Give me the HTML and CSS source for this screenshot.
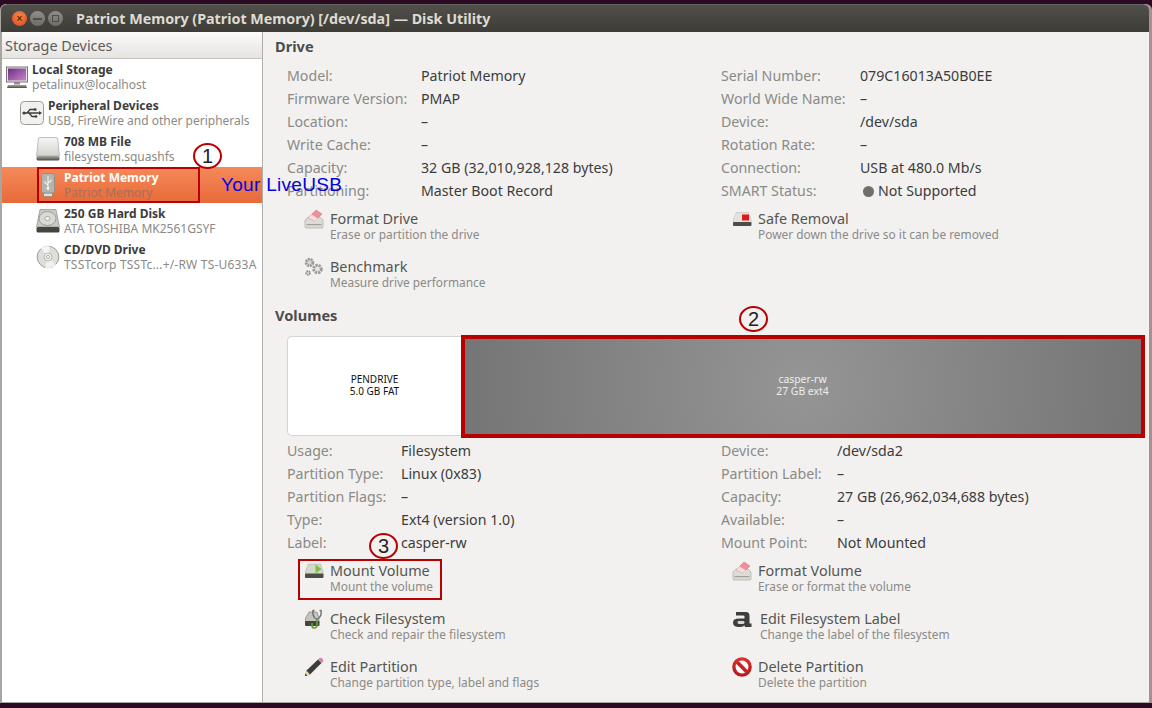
FILE: index.html
```html
<!DOCTYPE html>
<html lang="en">
	<head>
		<title>Disk Utility</title>
		<meta charset="utf-8">
		<link rel="stylesheet" href="styles.css">
	</head>

	<body>
		<svg class="defs" width="0" height="0">
			<defs>
				<linearGradient id="gDisk" x1="0" y1="0" x2="0" y2="1"><stop offset="0" stop-color="#f6f6f4"/><stop offset="1" stop-color="#d2d2ce"/></linearGradient>
				<linearGradient id="gDark" x1="0" y1="0" x2="0" y2="1"><stop offset="0" stop-color="#a8a8a2"/><stop offset="1" stop-color="#4a4a46"/></linearGradient>
				<linearGradient id="gScreen" x1="0" y1="0" x2="1" y2="1"><stop offset="0" stop-color="#6d2f86"/><stop offset="1" stop-color="#c684c4"/></linearGradient>
				<radialGradient id="gNo" cx="0.5" cy="0.3" r="0.8"><stop offset="0" stop-color="#ee3b3b"/><stop offset="1" stop-color="#a51515"/></radialGradient>
				<symbol id="iconErase" viewBox="0 0 20 20">
					<path d="M1 11 L4 8 H16 L19 11 V18 Q19 19 18 19 H2 Q1 19 1 18 Z" fill="#dcdcd6" stroke="#b4b4ae" stroke-width=".8"/>
					<rect x="2.5" y="15" width="15" height="1.2" fill="#a2a29c"/>
					<path d="M4 9 L12 1 L18 5 L11 12 Z" fill="#ee8f9a" stroke="#d97a85" stroke-width=".6"/>
					<path d="M4 9 L7.5 5.5 L14 9.5 L11 12 Z" fill="#f8dcdc"/>
				</symbol>
			</defs>
		</svg>

		<div class="window">
			<div class="titlebar">
				<div class="buttons">
					<span class="wbtn close">×</span>
					<span class="wbtn"><i class="minbar"></i></span>
					<span class="wbtn"><i class="maxbox"></i></span>
				</div>
				<div class="wtitle">Patriot Memory (Patriot Memory) [/dev/sda] — Disk Utility</div>
			</div>

			<div class="main">
				<div class="sidebar">
					<div class="sidehead">Storage Devices</div>
					<div class="tree">
						<div class="node">
							<svg class="ticon" viewBox="0 0 24 24" width="24" height="24">
								<rect x="1.5" y="2" width="21" height="15" fill="#e4e4e0" stroke="#77776f"/>
								<rect x="3" y="3.5" width="18" height="12" fill="url(#gScreen)"/>
								<rect x="9" y="17" width="6" height="2.5" fill="#8c8c86"/>
								<path d="M3 20 H21 L22 23 H2 Z" fill="url(#gDark)"/>
							</svg>
							<div class="ntext"><b>Local Storage</b><span>petalinux@localhost</span></div>
						</div>
						<div class="node lvl1">
							<svg class="ticon" viewBox="0 0 24 24" width="24" height="24">
								<rect x="0.5" y="0.5" width="23" height="23" rx="4" fill="#f1f1ef" stroke="#9b9b96"/>
								<path d="M3 12 H20 M7 12 L10 8.5 H14 M9 12 L12 15.5 H15" fill="none" stroke="#3d3d3a" stroke-width="1.3"/>
								<circle cx="4" cy="12" r="1.6" fill="#3d3d3a"/>
								<path d="M19 10 L22 12 L19 14 Z" fill="#3d3d3a"/>
								<rect x="14" y="7.3" width="2.4" height="2.4" fill="#3d3d3a"/>
								<circle cx="16" cy="15.5" r="1.3" fill="#3d3d3a"/>
							</svg>
							<div class="ntext"><b>Peripheral Devices</b><span>USB, FireWire and other peripherals</span></div>
						</div>
						<div class="node lvl2">
							<svg class="ticon" viewBox="0 0 24 24" width="24" height="24">
								<path d="M4 0.5 H20 Q21.5 0.5 21.7 2 L23.5 19 H0.5 L2.3 2 Q2.5 0.5 4 0.5 Z" fill="url(#gDisk)" stroke="#a8a8a2" stroke-width=".7"/>
								<rect x="0.5" y="19" width="23" height="4.5" rx="1.5" fill="url(#gDark)"/>
							</svg>
							<div class="ntext"><b>708 MB File</b><span>filesystem.squashfs</span></div>
						</div>
						<div class="node lvl2 selected">
							<svg class="ticon" viewBox="0 0 24 24" width="24" height="24">
								<rect x="7.5" y="20" width="9" height="3.5" fill="#e2e2de" stroke="#77776f" stroke-width=".6"/>
								<rect x="5.5" y="0.5" width="13" height="19.5" rx="2" fill="#b4b4af" stroke="#85857f" stroke-width=".7"/>
								<path d="M12 3 V15 M12 12 L9 9.8 V8 M12 10 L15 8 V6.5" fill="none" stroke="#f4f4f2" stroke-width="1.1"/>
								<circle cx="12" cy="15.5" r="1.4" fill="#f4f4f2"/>
							</svg>
							<div class="ntext"><b>Patriot Memory</b><span>Patriot Memory</span></div>
						</div>
						<div class="node lvl2">
							<svg class="ticon" viewBox="0 0 24 24" width="24" height="24">
								<path d="M4 0.5 H20 L23.5 18 H0.5 Z" fill="#c9c9c5" stroke="#8e8e88" stroke-width=".7"/>
								<ellipse cx="11.5" cy="9.5" rx="8.5" ry="7" fill="#d9d9d5" stroke="#8e8e88" stroke-width=".8"/>
								<ellipse cx="11.5" cy="9.5" rx="2.6" ry="2" fill="#f2f2f0" stroke="#8e8e88" stroke-width=".7"/>
								<rect x="0.5" y="18" width="23" height="5.5" rx="1.5" fill="#45453f"/>
							</svg>
							<div class="ntext"><b>250 GB Hard Disk</b><span>ATA TOSHIBA MK2561GSYF</span></div>
						</div>
						<div class="node lvl2">
							<svg class="ticon" viewBox="0 0 24 24" width="24" height="24">
								<circle cx="12" cy="12" r="10.8" fill="#dededa" stroke="#9c9c96"/>
								<path d="M12 12 L5 3 A11 11 0 0 1 14 1.5 Z" fill="#f5f5f3"/>
								<path d="M12 12 L20 20 A11 11 0 0 1 9 22.5 Z" fill="#f0f0ee"/>
								<circle cx="12" cy="12" r="4" fill="#f4f4f2" stroke="#9c9c96" stroke-width=".7"/>
								<circle cx="12" cy="12" r="1.6" fill="#fff" stroke="#8a8a84" stroke-width=".7"/>
							</svg>
							<div class="ntext"><b>CD/DVD Drive</b><span class="tight">TSSTcorp TSSTc...+/-RW TS-U633A</span></div>
						</div>
					</div>
				</div>

				<div class="content">
					<h2>Drive</h2>
					<div class="details drive">
						<span class="k">Model:</span><span class="v">Patriot Memory</span>
						<span class="k">Serial Number:</span><span class="v">079C16013A50B0EE</span>
						<span class="k">Firmware Version:</span><span class="v">PMAP</span>
						<span class="k">World Wide Name:</span><span class="v">–</span>
						<span class="k">Location:</span><span class="v">–</span>
						<span class="k">Device:</span><span class="v">/dev/sda</span>
						<span class="k">Write Cache:</span><span class="v">–</span>
						<span class="k">Rotation Rate:</span><span class="v">–</span>
						<span class="k">Capacity:</span><span class="v">32 GB (32,010,928,128 bytes)</span>
						<span class="k">Connection:</span><span class="v">USB at 480.0 Mb/s</span>
						<span class="k">Partitioning:</span><span class="v">Master Boot Record</span>
						<span class="k">SMART Status:</span><span class="v"><i class="dot"></i>Not Supported</span>
					</div>
					<div class="actions">
						<div class="action">
							<svg class="aicon" width="20" height="20"><use href="#iconErase"/></svg>
							<div class="atext"><b>Format Drive</b><span>Erase or partition the drive</span></div>
						</div>
						<div class="action">
							<svg class="aicon" viewBox="0 0 20 20" width="20" height="20">
								<path d="M1.5 10 L4.5 3.5 H16.5 L19 10 V14 H1.5 Z" fill="#e2e2de" stroke="#b4b4ae" stroke-width=".5"/>
								<rect x="10" y="5.5" width="7" height="6" fill="#e01818"/>
								<rect x="1" y="13" width="18.5" height="4" rx="1" fill="#4d4d48"/>
							</svg>
							<div class="atext"><b>Safe Removal</b><span>Power down the drive so it can be removed</span></div>
						</div>
						<div class="action">
							<svg class="aicon" viewBox="0 0 20 20" width="20" height="20">
								<circle cx="5.5" cy="5.5" r="3.4" fill="#d6d6d2" stroke="#9c9c97" stroke-width="2.8" stroke-dasharray="2 .8"/>
								<circle cx="13.5" cy="12" r="3.8" fill="#e6e6e2" stroke="#9c9c97" stroke-width="3" stroke-dasharray="2.2 .9"/>
								<circle cx="4" cy="16" r="1.8" fill="none" stroke="#8c8c86" stroke-width="2" stroke-dasharray="1.4 .7"/>
							</svg>
							<div class="atext"><b>Benchmark</b><span>Measure drive performance</span></div>
						</div>
					</div>

					<h2 class="volhead">Volumes</h2>
					<div class="volbar">
						<div class="vol first">PENDRIVE<br>5.0 GB FAT</div>
						<div class="vol second">casper-rw<br>27 GB ext4</div>
					</div>
					<div class="details volume">
						<span class="k">Usage:</span><span class="v">Filesystem</span>
						<span class="k">Device:</span><span class="v">/dev/sda2</span>
						<span class="k">Partition Type:</span><span class="v">Linux (0x83)</span>
						<span class="k">Partition Label:</span><span class="v">–</span>
						<span class="k">Partition Flags:</span><span class="v">–</span>
						<span class="k">Capacity:</span><span class="v">27 GB (26,962,034,688 bytes)</span>
						<span class="k">Type:</span><span class="v">Ext4 (version 1.0)</span>
						<span class="k">Available:</span><span class="v">–</span>
						<span class="k">Label:</span><span class="v">casper-rw</span>
						<span class="k">Mount Point:</span><span class="v">Not Mounted</span>
					</div>
					<div class="actions">
						<div class="action">
							<svg class="aicon" viewBox="0 0 20 20" width="20" height="20">
								<path d="M1.5 10 L4.5 3 H16.5 L19 10 V14 H1.5 Z" fill="#d4d8c8" stroke="#a8aca0" stroke-width=".5"/>
								<path d="M11.5 3.5 L17.5 8 L11.5 12.5 Z" fill="#7cc04a"/>
								<rect x="1" y="12.5" width="18.5" height="4.5" rx="1" fill="#4d4d48"/>
							</svg>
							<div class="atext"><b>Mount Volume</b><span>Mount the volume</span></div>
						</div>
						<div class="action">
							<svg class="aicon" width="20" height="20"><use href="#iconErase"/></svg>
							<div class="atext"><b>Format Volume</b><span>Erase or format the volume</span></div>
						</div>
						<div class="action">
							<svg class="aicon" viewBox="0 0 20 20" width="20" height="20">
								<path d="M1.5 9 L5 3 H13 L15 9 V14 H1.5 Z" fill="#c4c4bf" stroke="#77776f" stroke-width=".6"/>
								<rect x="1" y="12" width="14.5" height="5" rx="1" fill="#45453f"/>
								<path d="M10.5 1.5 H9 C8 6 10.5 9 13 10.5 C15.5 9 18 6 17 1.5 H15.5" fill="none" stroke="#6f6f6a" stroke-width="1.4"/>
								<path d="M13 10.5 V16.5 A2.5 2.5 0 0 1 8 16.5 V14" fill="none" stroke="#58a332" stroke-width="1.7"/>
							</svg>
							<div class="atext"><b>Check Filesystem</b><span>Check and repair the filesystem</span></div>
						</div>
						<div class="action wide">
							<svg class="aicon" viewBox="0 0 20 20" width="20" height="20">
								<path d="M4 3 H14 Q17.5 3 17.5 7 V14.5 H19.5 V18 H13 L12.5 16.5 Q11 18 7 18 Q1 18 1 13.5 Q1 9.5 7 9.5 H12.5 V7.5 Q12.5 6.5 11 6.5 H4 Z" fill="#3e3e3a"/>
								<rect x="5.5" y="12" width="7" height="3" rx="1.4" fill="#d8d8d4"/>
							</svg>
							<div class="atext"><b>Edit Filesystem Label</b><span>Change the label of the filesystem</span></div>
						</div>
						<div class="action">
							<svg class="aicon" viewBox="0 0 20 20" width="20" height="20">
								<path d="M1 19 L2.5 13.5 L14 2.5 L17.5 6 L6 17.5 Z" fill="#3c3c38"/>
								<path d="M1 19 L2.5 13.5 L6 17.5 Z" fill="#e9d9a8"/>
								<path d="M1 19 L1.6 16.8 L3.2 18.4 Z" fill="#222"/>
								<path d="M14 2.5 L15.5 1 Q16.5 .5 17.5 1 L19 2.6 Q19.5 3.5 19 4.5 L17.5 6 Z" fill="#d97fb4"/>
							</svg>
							<div class="atext"><b>Edit Partition</b><span>Change partition type, label and flags</span></div>
						</div>
						<div class="action">
							<svg class="aicon" viewBox="0 0 20 20" width="20" height="20">
								<circle cx="10" cy="10" r="9.8" fill="url(#gNo)"/>
								<circle cx="10" cy="10" r="6.4" fill="#fff"/>
								<path d="M4 6.6 L6.6 4 L16 13.4 L13.4 16 Z" fill="#c92020"/>
							</svg>
							<div class="atext"><b>Delete Partition</b><span>Delete the partition</span></div>
						</div>
					</div>
				</div>
			</div>
		</div>

		<!-- annotations drawn over the screenshot -->
		<div class="mark box-usb"></div>
		<div class="mark box-vol"></div>
		<div class="mark box-mount"></div>
		<div class="mark circle c1">1</div>
		<div class="mark circle c2">2</div>
		<div class="mark circle c3">3</div>
		<div class="mark liveusb">Your LiveUSB</div>
	</body>
</html>
```

FILE: styles.css
```css
body {
	background-color: #2c0a24;
	margin: 0px;
	width: 1152px;
	height: 708px;
	overflow: hidden;
	position: relative;
	font-family: "Noto Sans", sans-serif;
	font-size: 14.2px;
}

.defs {
	position: absolute;
}

.window {
	margin: 4px 0 0 1px;
	width: 1148px;
	height: 699px;
	display: flex;
	flex-direction: column;
	background-color: #f2f1f0;
	border-radius: 6px 6px 0 0;
	border-bottom: 1px solid #a8a6a2;
	box-sizing: border-box;
	box-shadow: 3px 0 0 #a89090, -1px 0 0 #a8a6a2;
}

.titlebar {
	height: 28px;
	flex: none;
	display: flex;
	align-items: center;
	background: linear-gradient(#504f4a, #3d3c37);
	border-radius: 6px 6px 0 0;
	border-top: 1px solid #62615b;
	box-sizing: border-box;
}

.buttons {
	display: flex;
	gap: 3px;
	margin-left: 11px;
	width: 64px;
}

.wbtn {
	width: 15px;
	height: 15px;
	display: flex;
	align-items: center;
	justify-content: center;
	border-radius: 50%;
	background: linear-gradient(#8f8e88, #6d6c67);
	color: #3d3c37;
	font: bold 10px/15px "Liberation Sans", sans-serif;
}

.wbtn.close {
	background: radial-gradient(circle at 50% 35%, #f58a4a, #d9451f);
	color: #6a2a10;
}

.minbar {
	width: 9px;
	height: 2px;
	background-color: #4e4d48;
}

.maxbox {
	width: 5px;
	height: 5px;
	border: 1px solid #4e4d48;
}

.wtitle {
	color: #dfdbd2;
	font-weight: bold;
	font-size: 14.3px;
}

.main {
	flex: 1;
	display: flex;
	min-height: 0;
}

.sidebar {
	width: 262px;
	flex: none;
	background-color: #fff;
	border-right: 1px solid #b0aeaa;
	border-left: 1px solid #a8a6a2;
	box-sizing: border-box;
}

.sidehead {
	height: 27px;
	line-height: 28px;
	padding-left: 3px;
	box-sizing: border-box;
	color: #5c5c58;
	font-size: 14.4px;
	background: linear-gradient(#fbfbfa, #e6e4e1);
	border-bottom: 1px solid #c4c2be;
}

.node {
	height: 36px;
	display: flex;
	align-items: center;
	padding-left: 3px;
	gap: 3px;
}

.lvl1 {
	padding-left: 18px;
	gap: 4px;
}

.lvl2 {
	padding-left: 34px;
	gap: 4px;
}

.ticon {
	flex: none;
}

.ntext {
	display: flex;
	flex-direction: column;
	font-size: 12px;
	line-height: 15px;
	color: #8a8a86;
	white-space: nowrap;
}

.ntext b {
	color: #3c3c3c;
}

.tight {
	letter-spacing: .2px;
}

.selected {
	background: linear-gradient(#f6895a, #e86a39);
}

.selected .ntext b {
	color: #fff;
}

.selected .ntext span {
	color: #a86f58;
}

.content {
	flex: 1;
	padding: 2px 0 0 12px;
	min-width: 0;
}

h2 {
	margin: 0 0 6px 0;
	font-size: 14.6px;
	line-height: 24px;
	color: #4c4c4c;
}

.volhead {
	margin: 5px 0 9px 0;
}

.details {
	display: grid;
	grid-auto-rows: 23px;
	line-height: 23px;
	padding-left: 12px;
}

.drive {
	grid-template-columns: 134px 300px 139px 1fr;
}

.volume {
	grid-template-columns: 114px 320px 116px 1fr;
	margin-top: 3px;
}

.k {
	color: #8a8a86;
}

.v {
	color: #3c3c3c;
}

.dot {
	display: inline-block;
	width: 11px;
	height: 11px;
	border-radius: 50%;
	background-color: #6f6f6c;
	margin: 0 4px 1px 3px;
	vertical-align: middle;
}

.actions {
	display: grid;
	grid-template-columns: 428px 1fr;
	grid-auto-rows: 48px;
	padding-left: 29px;
}

.action {
	display: flex;
	align-items: flex-start;
	gap: 6px;
}

.aicon {
	flex: none;
	margin-top: 7px;
}

.wide {
	gap: 8px;
}

.atext {
	display: flex;
	flex-direction: column;
	margin-top: 9px;
	color: #8a8a86;
	font-size: 11.9px;
	line-height: 15px;
}

.atext span {
	margin-top: 1px;
}

.atext b {
	font-weight: normal;
	font-size: 14.4px;
	color: #55554f;
}

.volbar {
	display: flex;
	margin-left: 12px;
	width: 857px;
	height: 100px;
	font-size: 10px;
	line-height: 12px;
	text-align: center;
}

.vol {
	display: flex;
	align-items: center;
	justify-content: center;
	padding-bottom: 2px;
	box-sizing: border-box;
}

.first {
	width: 174px;
	background-color: #fff;
	border: 1px solid #d6d4d0;
	border-right: 0;
	border-radius: 5px 0 0 5px;
	color: #111;
}

.second {
	flex: 1;
	background: radial-gradient(circle farthest-side at center, #959595, #757575);
	color: #eee;
	font-size: 10.4px;
}

.mark {
	position: absolute;
	box-sizing: border-box;
}

.box-usb {
	left: 37px;
	top: 167px;
	width: 163px;
	height: 36px;
	border: 2px solid #b80000;
}

.box-vol {
	left: 461px;
	top: 335px;
	width: 684px;
	height: 103px;
	border: 4px solid #b80000;
}

.box-mount {
	left: 298px;
	top: 559px;
	width: 144px;
	height: 41px;
	border: 2px solid #b80000;
}

.circle {
	width: 29px;
	height: 26px;
	border: 2px solid #b80000;
	border-radius: 50%;
	color: #222;
	font: 20px/22px "Liberation Sans", sans-serif;
	text-align: center;
}

.c1 {
	left: 193px;
	top: 143px;
}

.c2 {
	left: 739px;
	top: 306px;
}

.c3 {
	left: 369px;
	top: 533px;
}

.liveusb {
	left: 221px;
	top: 174px;
	color: #0000e0;
	font: 19px/22px "Liberation Sans", sans-serif;
	letter-spacing: .3px;
}
```
